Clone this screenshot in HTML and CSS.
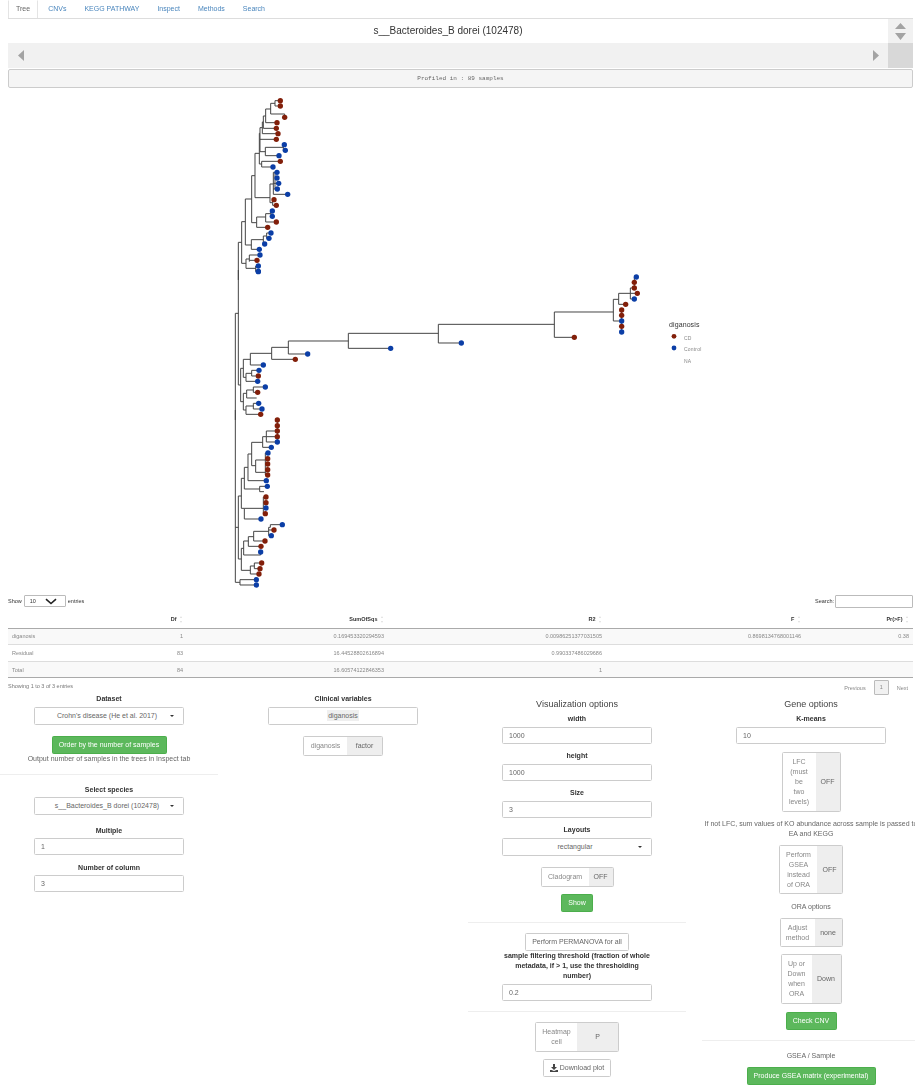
FILE: index.html
```html
<!DOCTYPE html>
<html lang="en">
  <head>
    <meta charset="UTF-8" />
    <meta name="viewport" content="width=device-width, initial-scale=1.0" />
    <title>Tree</title>
    <link rel="stylesheet" href="styles.css">
  </head>
  <body>
    <!-- Tabs -->
    <ul class="tabs">
      <li class="active"><a>Tree</a></li>
      <li><a>CNVs</a></li>
      <li><a>KEGG PATHWAY</a></li>
      <li><a>Inspect</a></li>
      <li><a>Methods</a></li>
      <li><a>Search</a></li>
    </ul>

    <!-- Title with its scrollbars -->
    <div class="scroller">
      <div class="title">s__Bacteroides_B dorei (102478)</div>
      <div class="vbar">
        <svg width="11" height="17" viewBox="0 0 11 17"><path d="M5.5 0L11 6H0zM0 10H11L5.5 17z"/></svg>
      </div>
      <div class="hbar">
        <svg width="6" height="11" viewBox="0 0 6 11"><path d="M6 0V11L0 5.5z"/></svg>
        <svg width="6" height="11" viewBox="0 0 6 11"><path d="M0 0V11L6 5.5z"/></svg>
      </div>
      <div class="corner"></div>
    </div>
    <pre class="well">Profiled in : 89 samples</pre>

    <!-- Tree plot -->
    <svg class="plot" width="915" height="504" viewBox="0 88 915 504">
      <g transform="translate(220,90) scale(.33333)">
        <path class="branch" d="M55 570V457H65M65 520V395H76M76 465V327H95M95 398V257H105M105 323V190H118M118 222V130H120M120 185V113H127M127 131V96H130M130 115V78H137M137 98V57H152M152 72V40H165M165 48V32M165 32H181M165 48H181M152 72H194V82M137 98H171M130 115H169M127 131H174M120 148H169M120 185H136M136 197V172H190M190 181V164M190 164H193M190 181H196M136 197H177M118 222H125M125 231V214H181M125 231H159M105 323H150M150 338V282H160M160 313V247H165V297M165 247H171M165 264H171M160 280H176M160 297H172M160 313H203M150 338H158M158 346V329H162M158 346H169M95 398H110M110 412V381H137M137 396V371H153M153 379V363H157M153 379H157M137 396H169M110 412H143M76 465H94M94 478V449H130M130 462V438H140M140 445V429H153M140 445H147M130 462H134M94 478H118M65 520H78M78 535V507H88M88 515V495H120M88 511H111M78 535H107M107 544V528H115M107 544H115"/>
        <g class="cd"><circle cx="181" cy="32" r="7"/><circle cx="181" cy="48" r="7"/><circle cx="194" cy="82" r="7"/><circle cx="171" cy="98" r="7"/><circle cx="169" cy="115" r="7"/><circle cx="174" cy="131" r="7"/><circle cx="169" cy="148" r="7"/><circle cx="181" cy="214" r="7"/><circle cx="162" cy="329" r="7"/><circle cx="169" cy="346" r="7"/><circle cx="169" cy="396" r="7"/><circle cx="143" cy="412" r="7"/><circle cx="111" cy="511" r="7"/></g>
        <g class="ct"><circle cx="193" cy="164" r="7"/><circle cx="196" cy="181" r="7"/><circle cx="177" cy="197" r="7"/><circle cx="159" cy="231" r="7"/><circle cx="171" cy="247" r="7"/><circle cx="171" cy="264" r="7"/><circle cx="176" cy="280" r="7"/><circle cx="172" cy="297" r="7"/><circle cx="203" cy="313" r="7"/><circle cx="157" cy="363" r="7"/><circle cx="157" cy="379" r="7"/><circle cx="153" cy="429" r="7"/><circle cx="147" cy="445" r="7"/><circle cx="134" cy="462" r="7"/><circle cx="118" cy="478" r="7"/><circle cx="120" cy="495" r="7"/><circle cx="115" cy="528" r="7"/><circle cx="115" cy="544" r="7"/></g>
      </g>
      <g transform="translate(220,270) scale(.33333)">
        <path class="branch" d="M55 0V345M46 450V130H55M55 345H62M62 395V295H70M70 322V268H91M91 285V250H155M155 268V232H205M205 252V213H385M385 235V190H655M655 219V163H1003M1003 202V126H1180M1180 153V88H1196M1196 103V70H1231M1231 87V54H1243V21H1249M1243 37H1243M1231 70H1252M1231 87H1243M1196 103H1217M1180 153H1205M1205 186V120M1003 202H1063M655 219H724M385 235H512M205 252H263M155 268H226M91 285H130M70 322H78M78 334V310H95M95 318V301H117M95 318H115M78 334H113M62 395H70M70 420V370H80M80 384V360H100M100 367V351H136M100 367H113M80 384H110M70 420H78M78 433V408H100M100 417V400H116M100 417H126M78 433H122"/>
        <g class="cd"><circle cx="1243" cy="37" r="7"/><circle cx="1243" cy="54" r="7"/><circle cx="1252" cy="70" r="7"/><circle cx="1217" cy="103" r="7"/><circle cx="1205" cy="120" r="7"/><circle cx="1205" cy="136" r="7"/><circle cx="1205" cy="169" r="7"/><circle cx="1063" cy="202" r="7"/><circle cx="226" cy="268" r="7"/><circle cx="115" cy="318" r="7"/><circle cx="113" cy="367" r="7"/><circle cx="122" cy="433" r="7"/></g>
        <g class="ct"><circle cx="115" cy="5" r="7"/><circle cx="1249" cy="21" r="7"/><circle cx="1243" cy="87" r="7"/><circle cx="1205" cy="153" r="7"/><circle cx="1205" cy="186" r="7"/><circle cx="724" cy="219" r="7"/><circle cx="512" cy="235" r="7"/><circle cx="263" cy="252" r="7"/><circle cx="130" cy="285" r="7"/><circle cx="117" cy="301" r="7"/><circle cx="113" cy="334" r="7"/><circle cx="136" cy="351" r="7"/><circle cx="116" cy="400" r="7"/><circle cx="126" cy="417" r="7"/></g>
      </g>
      <g transform="translate(220,410) scale(.33333)">
        <path class="branch" d="M46 0V517M46 352H55M55 447V258H64M64 295V205H73M73 237V172H84M84 212V132H95M95 167V97H128M128 112V80H139M139 96V63H172M172 30V96M139 80H172M139 96H172M128 112H154M95 167H107M107 187V150H136M136 129V195M136 129H144M136 146H143M136 162H143M136 179H143M107 187H136M136 195H143M84 212H139M73 237H119M119 245V229H142M119 245H132M64 295H73M73 327V295H130M130 261V311M130 261H138M130 278H138M130 311H136M73 327H123M55 447H64M64 481V415H71M71 435V393H85M85 409V380H101M101 393V364H146M146 377V352H151V344H187M146 360H162M146 377H154M101 393H135M85 409H123M71 435H122V426M64 481H91M91 492V468H103M103 476V459H125M103 476H120M91 492H117M46 517H60M60 525V509H109M60 525H109"/>
        <g class="cd"><circle cx="172" cy="30" r="7"/><circle cx="172" cy="47" r="7"/><circle cx="172" cy="63" r="7"/><circle cx="172" cy="80" r="7"/><circle cx="143" cy="146" r="7"/><circle cx="143" cy="162" r="7"/><circle cx="143" cy="179" r="7"/><circle cx="143" cy="195" r="7"/><circle cx="138" cy="261" r="7"/><circle cx="138" cy="278" r="7"/><circle cx="136" cy="311" r="7"/><circle cx="162" cy="360" r="7"/><circle cx="135" cy="393" r="7"/><circle cx="123" cy="409" r="7"/><circle cx="125" cy="459" r="7"/><circle cx="120" cy="476" r="7"/><circle cx="117" cy="492" r="7"/></g>
        <g class="ct"><circle cx="172" cy="96" r="7"/><circle cx="154" cy="112" r="7"/><circle cx="144" cy="129" r="7"/><circle cx="139" cy="212" r="7"/><circle cx="142" cy="229" r="7"/><circle cx="138" cy="294" r="7"/><circle cx="123" cy="327" r="7"/><circle cx="187" cy="344" r="7"/><circle cx="154" cy="377" r="7"/><circle cx="122" cy="426" r="7"/><circle cx="109" cy="509" r="7"/><circle cx="109" cy="525" r="7"/></g>
      </g>
      <!-- legend -->
      <text class="legend-title" x="669" y="326.5">diganosis</text>
      <circle class="cd" cx="674" cy="336.3" r="2.4"/>
      <circle class="ct" cx="674" cy="348" r="2.4"/>
      <text class="legend-item" x="684" y="339.5">CD</text>
      <text class="legend-item" x="684" y="350.5">Control</text>
      <text class="legend-item" x="684" y="362.5">NA</text>
    </svg>

    <!-- PERMANOVA table -->
    <div class="dt">
      <div class="dt-top">
        <div class="dt-length">Show
          <span class="dt-select">10
            <svg width="12" height="7" viewBox="0 0 12 7"><path d="M1 1.2L6 5.5L11 1.2"/></svg>
          </span>
          entries
        </div>
        <div class="dt-search">Search: <span class="dt-input"></span></div>
      </div>
      <table>
        <colgroup>
          <col class="c-name"><col class="c-df"><col class="c-sum"><col class="c-r2"><col class="c-f"><col class="c-p">
        </colgroup>
        <thead>
          <tr>
            <th></th>
            <th>Df <i class="sort"></i></th>
            <th>SumOfSqs <i class="sort"></i></th>
            <th>R2 <i class="sort"></i></th>
            <th>F <i class="sort"></i></th>
            <th>Pr(&gt;F) <i class="sort"></i></th>
          </tr>
        </thead>
        <tbody>
          <tr class="odd"><td>diganosis</td><td>1</td><td>0.169453320294593</td><td>0.00986251377031505</td><td>0.8698134768001146</td><td>0.38</td></tr>
          <tr><td>Residual</td><td>83</td><td>16.44528802616894</td><td>0.990337486029686</td><td></td><td></td></tr>
          <tr class="odd"><td>Total</td><td>84</td><td>16.60574122846353</td><td>1</td><td></td><td></td></tr>
        </tbody>
      </table>
      <div class="dt-foot">
        <span>Showing 1 to 3 of 3 entries</span>
        <div class="pager"><a>Previous</a><a class="current">1</a><a>Next</a></div>
      </div>
    </div>

    <!-- Option panels -->
    <div class="panels">
      <div class="col">
        <div class="field field-select">
          <label>Dataset</label>
          <div class="select">Crohn's disease (He et al. 2017)</div>
        </div>
        <button class="btn green order">Order by the number of samples</button>
        <p class="note">Output number of samples in the trees in Inspect tab</p>
        <hr class="hr-first">
        <div class="field field-select">
          <label>Select species</label>
          <div class="select">s__Bacteroides_B dorei (102478)</div>
        </div>
        <div class="field">
          <label>Multiple</label>
          <div class="input">1</div>
        </div>
        <div class="field">
          <label>Number of column</label>
          <div class="input">3</div>
        </div>
      </div>

      <div class="col">
        <div class="field">
          <label>Clinical variables</label>
          <div class="select plain"><span class="chip">diganosis</span></div>
        </div>
        <div class="switch sw-factor"><span>diganosis</span><b>factor</b></div>
      </div>

      <div class="col">
        <h4>Visualization options</h4>
        <div class="field">
          <label>width</label>
          <div class="input">1000</div>
        </div>
        <div class="field">
          <label>height</label>
          <div class="input">1000</div>
        </div>
        <div class="field">
          <label>Size</label>
          <div class="input">3</div>
        </div>
        <div class="field">
          <label>Layouts</label>
          <div class="select">rectangular</div>
        </div>
        <div class="switch sw-clado"><span>Cladogram</span><b>OFF</b></div>
        <button class="btn green show">Show</button>
        <hr>
        <button class="btn perm">Perform PERMANOVA for all</button>
        <div class="field thresh">
          <label>sample filtering threshold (fraction of whole<br>metadata, if &gt; 1, use the thresholding<br>number)</label>
          <div class="input">0.2</div>
        </div>
        <hr class="hr-tight">
        <div class="switch sw-heat"><span>Heatmap<br>cell</span><b>P</b></div>
        <button class="btn download">
          <svg width="8" height="8" viewBox="0 0 8 8"><path d="M3 0H5V3H7L4 6L1 3H3zM0 6H1.5L4 7L6.5 6H8V8H0z"/></svg>
          Download plot
        </button>
      </div>

      <div class="col">
        <h4>Gene options</h4>
        <div class="field">
          <label>K-means</label>
          <div class="input">10</div>
        </div>
        <div class="switch sw-lfc"><span>LFC<br>(must<br>be<br>two<br>levels)</span><b>OFF</b></div>
        <p class="note wide">If not LFC, sum values of KO abundance across sample is passed to<br>EA and KEGG</p>
        <div class="switch sw-gsea"><span>Perform<br>GSEA<br>instead<br>of ORA</span><b>OFF</b></div>
        <p class="note ora">ORA options</p>
        <div class="switch sw-adjust"><span>Adjust<br>method</span><b>none</b></div>
        <div class="switch sw-updown"><span>Up or<br>Down<br>when<br>ORA</span><b>Down</b></div>
        <button class="btn green check">Check CNV</button>
        <hr>
        <p class="note gsea">GSEA / Sample</p>
        <button class="btn green produce">Produce GSEA matrix (experimental)</button>
      </div>
    </div>
  </body>
</html>
```

FILE: styles.css
```css
html, body {
  margin: 0;
  padding: 0;
}

body {
  width: 915px;
  height: 1091px;
  overflow: hidden;
  font-family: "Liberation Sans", Arial, sans-serif;
  font-size: 7px;
  line-height: 10px;
  color: #444;
  background: #fff;
  filter: blur(.35px);
}

/* Tabs */
.tabs {
  display: flex;
  margin: 0;
  padding: 0 0 0 8px;
  height: 18px;
  box-sizing: border-box;
  list-style: none;
}
.tabs li {
  margin-right: 2px;
}
.tabs a {
  display: block;
  padding: 3px 7px;
  color: #4a86bd;
  border: 1px solid transparent;
  border-bottom: 0;
}
.tabs .active {
  height: 18px;
  background: #fff;
}
.tabs .active a {
  height: 18px;
  box-sizing: border-box;
  color: #666;
  border-left-color: #e4e4e4;
  border-right-color: #e4e4e4;
}

/* Title with scrollbars */
.scroller {
  display: grid;
  grid-template-columns: 880px 25px;
  grid-template-rows: 24px 25px;
  margin: 1px 0 0 8px;
  width: 905px;
  box-shadow: 0 -1px 0 #ddd;
}
.title {
  font-size: 10px;
  line-height: 24px;
  text-align: center;
  color: #333;
}
.vbar {
  display: flex;
  justify-content: center;
  padding-top: 4px;
  background: #f1f1f1;
}
.hbar {
  display: flex;
  justify-content: space-between;
  align-items: center;
  padding: 0 9px 0 10px;
  background: #f1f1f1;
}
.corner {
  background: #d8d8d8;
}
.vbar svg,
.hbar svg {
  fill: #a3a3a3;
}

.well {
  margin: 1px 0 0 8px;
  width: 905px;
  height: 19px;
  box-sizing: border-box;
  border: 1px solid #ccc;
  border-radius: 2px;
  background: #f5f5f5;
  font-family: "Liberation Mono", monospace;
  font-size: 6px;
  line-height: 17px;
  text-align: center;
  color: #666;
}

/* Tree plot */
.plot {
  display: block;
}
.branch {
  fill: none;
  stroke: #444;
  stroke-width: 3;
}
.cd {
  fill: #821f0a;
}
.ct {
  fill: #0b3ea6;
}
.cd circle,
.ct circle {
  r: 8px;
}
.legend-title {
  font-size: 7px;
  letter-spacing: .1px;
  fill: #333;
}
.legend-item {
  font-size: 5px;
  letter-spacing: .2px;
  fill: #888;
}

/* Table */
.dt {
  margin-left: 8px;
  width: 905px;
  font-size: 5.5px;
}
.dt-top {
  display: flex;
  justify-content: space-between;
  align-items: center;
  height: 18px;
  color: #333;
}
.dt-length,
.dt-search {
  display: flex;
  align-items: center;
  gap: 2px;
}
.dt-search {
  gap: 1px;
}
.dt-select {
  display: flex;
  justify-content: space-between;
  align-items: center;
  width: 42px;
  height: 12px;
  padding: 0 8px 0 5px;
  box-sizing: border-box;
  border: 1px solid #bbb;
  border-radius: 1px;
}
.dt-select path {
  fill: none;
  stroke: #222;
  stroke-width: 1.6;
}
.dt-input {
  width: 78px;
  height: 13px;
  box-sizing: border-box;
  border: 1px solid #bbb;
  border-radius: 1px;
}
table {
  width: 905px;
  table-layout: fixed;
  border-collapse: collapse;
}
.c-name { width: 142px; }
.c-df { width: 37px; }
.c-sum { width: 201px; }
.c-r2 { width: 218px; }
.c-f { width: 199px; }
.c-p { width: 108px; }
th {
  height: 18px;
  padding: 0 4px 0 0;
  box-sizing: border-box;
  text-align: right;
  color: #333;
  border-bottom: 1px solid #aaa;
}
td {
  height: 16.67px;
  padding: 0 4px;
  box-sizing: border-box;
  text-align: right;
  color: #888;
  border-bottom: 1px solid #ddd;
}
td:first-child {
  text-align: left;
}
.odd td {
  background: #f9f9f9;
}
tbody tr:last-child td {
  border-bottom-color: #aaa;
}
.sort {
  display: inline-block;
  position: relative;
  width: 3px;
  height: 7px;
  margin-left: 2px;
  vertical-align: middle;
}
.sort:before,
.sort:after {
  content: "";
  position: absolute;
  left: 0;
  border-left: 1.5px solid transparent;
  border-right: 1.5px solid transparent;
}
.sort:before {
  top: 0;
  border-bottom: 2.5px solid #ddd;
}
.sort:after {
  bottom: 0;
  border-top: 2.5px solid #ddd;
}
.dt-foot {
  display: flex;
  justify-content: space-between;
  align-items: center;
  height: 16px;
  color: #777;
}
.pager {
  display: flex;
  align-items: center;
  gap: 5px;
  padding-right: 5px;
  height: 15px;
  margin-top: 3px;
}
.pager a {
  color: #888;
}
.pager .current {
  width: 15px;
  height: 15px;
  margin: 0 3px;
  box-sizing: border-box;
  border: 1px solid #bbb;
  border-radius: 1px;
  background: #f1f1f1;
  line-height: 13px;
  text-align: center;
}

/* Option panels */
.panels {
  display: grid;
  grid-template-columns: repeat(4, 234px);
  margin-left: -8px;
  width: 936px;
}
.col {
  padding: 0 8px;
  text-align: center;
}
h4 {
  margin: 4.5px 0 5.5px;
  font-size: 9px;
  font-weight: normal;
  line-height: 10px;
  color: #444;
}
hr {
  margin: 10px 0;
  border: 0;
  border-top: 1px solid #eee;
}
.field {
  margin-bottom: 7.5px;
}
.field-select {
  margin-bottom: 10.5px;
}
label {
  display: block;
  margin-bottom: 2.5px;
  font-weight: bold;
  color: #333;
}
.input,
.select {
  width: 150px;
  margin: 0 auto;
  box-sizing: border-box;
  border: 1px solid #ccc;
  border-radius: 1.5px;
  background: #fff;
  color: #666;
}
.input {
  height: 17px;
  padding: 0 6px;
  line-height: 15px;
  text-align: left;
}
.select {
  position: relative;
  height: 18px;
  padding-right: 4px;
  line-height: 16px;
}
.select:after {
  content: "";
  position: absolute;
  right: 9px;
  top: 7px;
  border-left: 2px solid transparent;
  border-right: 2px solid transparent;
  border-top: 2px solid #333;
}
.plain {
  padding: 0;
}
.plain:after {
  display: none;
}
.chip {
  display: inline-block;
  padding: 0 1px;
  line-height: 11px;
  background: #efefef;
}
.note {
  margin: 0;
  color: #666;
}
.wide {
  margin: 7.5px -10px 5.5px;
  white-space: nowrap;
}
.ora {
  margin: 8px 0 5.5px;
}
.gsea {
  margin: 10px 0 5.5px;
}

.btn {
  display: block;
  margin: 0 auto;
  padding: 0 6px;
  height: 18px;
  box-sizing: border-box;
  border: 1px solid #ccc;
  border-radius: 1.5px;
  background: #fff;
  font-family: inherit;
  font-size: 7px;
  line-height: 10px;
  color: #666;
}
.green {
  border-color: #4cae4c;
  background: #5cb85c;
  color: #fff;
}
.order {
  margin-top: 11.5px;
  width: 115px;
  padding: 0;
}
.show {
  margin-top: 7.5px;
  width: 32px;
  padding: 0;
}
.check {
  margin-top: 8.5px;
  width: 51px;
  padding: 0;
}
.produce {
  width: 129px;
  padding: 0;
}
.perm {
  width: 104px;
  height: 17.5px;
  padding: 0;
}
.thresh {
  margin-bottom: 0;
}
.thresh label {
  margin: 0 8px 3px;
}
.hr-tight {
  margin-top: 10.5px;
}
.hr-first {
  margin-bottom: 9.5px;
}
.download {
  display: flex;
  justify-content: center;
  align-items: center;
  gap: 2px;
  margin-top: 7.5px;
  width: 68px;
  height: 17.5px;
  padding: 0;
}
.download svg {
  fill: #444;
}

/* On/off switches */
.switch {
  display: grid;
  width: max-content;
  margin: 0 auto;
  box-sizing: border-box;
  border: 1px solid #ccc;
  border-radius: 1.5px;
  color: #777;
}
.switch span,
.switch b {
  display: flex;
  justify-content: center;
  align-items: center;
  padding: 3.75px 0;
  text-align: center;
  font-weight: normal;
}
.switch span {
  color: #888;
}
.switch b {
  background: #eee;
  color: #666;
}
.sw-factor {
  grid-template-columns: 43px 35px;
  margin-top: 11.5px;
}
.sw-clado {
  grid-template-columns: 47px 24px;
  margin-top: 11.5px;
}
.sw-heat {
  grid-template-columns: 41px 41px;
}
.sw-lfc {
  grid-template-columns: 33px 24px;
  margin-top: 8.5px;
}
.sw-gsea {
  grid-template-columns: 37px 25px;
}
.sw-adjust {
  grid-template-columns: 34px 27px;
}
.sw-updown {
  grid-template-columns: 30px 29px;
  margin-top: 7px;
}
```
